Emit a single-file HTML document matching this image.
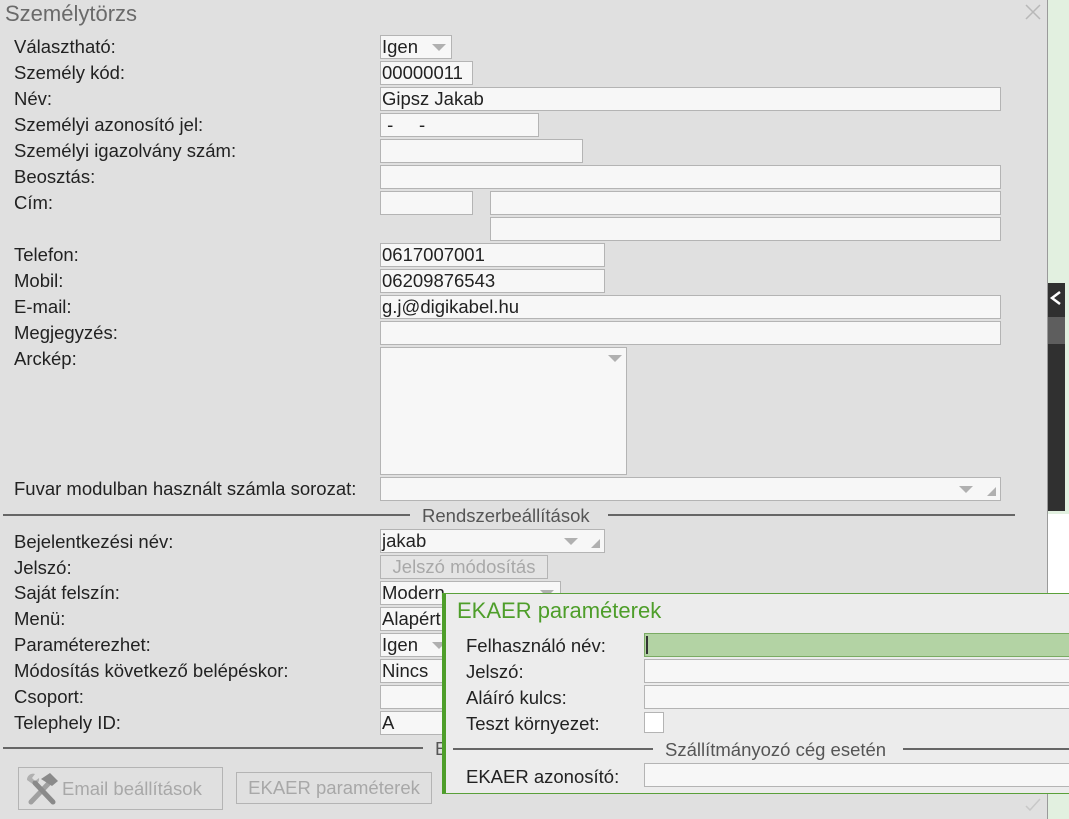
<!DOCTYPE html>
<html><head><meta charset="utf-8"><style>
*{margin:0;padding:0;box-sizing:border-box}
body{width:1069px;height:819px;overflow:hidden;background:#e0e0e0;font-family:"Liberation Sans",Arial,sans-serif;font-size:18.5px;color:#222;position:relative}
.a{position:absolute;white-space:nowrap}
.l{position:absolute;left:14px;line-height:20px;white-space:nowrap}
.i{position:absolute;background:#f7f7f7;border:1px solid #b4b4b4;height:24px;line-height:22px;padding-left:1px;white-space:nowrap;overflow:hidden}
.tri{position:absolute;width:0;height:0;border-left:7px solid transparent;border-right:7px solid transparent;border-top:7px solid #b0b0b0}
.rs{position:absolute;width:0;height:0;border-left:9px solid transparent;border-bottom:9px solid #b0b0b0}
.line{position:absolute;height:2px;background:#666}
</style></head><body>
<div class="a" style="left:1047px;top:0;width:1px;height:819px;background:#9a9a9a"></div>
<div class="a" style="left:1048px;top:0;width:21px;height:819px;background:#e2f0e0"></div>
<div class="a" style="left:1048px;top:514px;width:21px;height:80px;background:#fff"></div>
<div class="a" style="left:1048px;top:283px;width:17px;height:228px;background:#303030"></div>
<div class="a" style="left:1048px;top:317px;width:17px;height:27px;background:#5e5e5e"></div>
<svg class="a" style="left:1048px;top:290px" width="14" height="16"><path d="M12 2 L4 8 L12 14" stroke="#fff" stroke-width="2.5" fill="none"/></svg>

<div class="a" style="left:5px;top:1px;font-size:22px;color:#6a6a6a">Személytörzs</div>
<svg class="a" style="left:1024px;top:3px" width="18" height="18"><path d="M2 2 L16 16 M16 2 L2 16" stroke="#b8b8b8" stroke-width="1.5"/></svg>

<div class="l" style="top:37px">Választható:</div>
<div class="l" style="top:63px">Személy kód:</div>
<div class="l" style="top:89px">Név:</div>
<div class="l" style="top:115px">Személyi azonosító jel:</div>
<div class="l" style="top:141px">Személyi igazolvány szám:</div>
<div class="l" style="top:167px">Beosztás:</div>
<div class="l" style="top:193px">Cím:</div>
<div class="l" style="top:245px">Telefon:</div>
<div class="l" style="top:271px">Mobil:</div>
<div class="l" style="top:297px">E-mail:</div>
<div class="l" style="top:323px">Megjegyzés:</div>
<div class="l" style="top:349px">Arckép:</div>
<div class="l" style="top:479px">Fuvar modulban használt számla sorozat:</div>

<div class="i" style="left:380px;top:35px;width:72px">Igen</div><div class="tri" style="left:432px;top:44px"></div>
<div class="i" style="left:380px;top:61px;width:93px">00000011</div>
<div class="i" style="left:380px;top:87px;width:621px">Gipsz Jakab</div>
<div class="i" style="left:380px;top:113px;width:159px">&nbsp;-&nbsp;&nbsp;&nbsp;&nbsp;&nbsp;-</div>
<div class="i" style="left:380px;top:139px;width:203px"></div>
<div class="i" style="left:380px;top:165px;width:621px"></div>
<div class="i" style="left:380px;top:191px;width:93px"></div>
<div class="i" style="left:490px;top:191px;width:511px"></div>
<div class="i" style="left:490px;top:217px;width:511px"></div>
<div class="i" style="left:380px;top:243px;width:225px">0617007001</div>
<div class="i" style="left:380px;top:269px;width:225px">06209876543</div>
<div class="i" style="left:380px;top:295px;width:621px">g.j@digikabel.hu</div>
<div class="i" style="left:380px;top:321px;width:621px"></div>
<div class="i" style="left:380px;top:347px;width:247px;height:128px"></div><div class="tri" style="left:608px;top:355px"></div>
<div class="i" style="left:380px;top:477px;width:621px"></div><div class="tri" style="left:959px;top:486px"></div><div class="rs" style="left:987px;top:487px"></div>

<div class="line" style="left:3px;top:514px;width:407px"></div>
<div class="a" style="left:422px;top:505px;color:#555">Rendszerbeállítások</div>
<div class="line" style="left:608px;top:514px;width:407px"></div>

<div class="l" style="top:532px">Bejelentkezési név:</div>
<div class="l" style="top:558px">Jelszó:</div>
<div class="l" style="top:583px">Saját felszín:</div>
<div class="l" style="top:609px">Menü:</div>
<div class="l" style="top:635px">Paraméterezhet:</div>
<div class="l" style="top:661px">Módosítás következő belépéskor:</div>
<div class="l" style="top:687px">Csoport:</div>
<div class="l" style="top:713px">Telephely ID:</div>

<div class="i" style="left:380px;top:529px;width:225px">jakab</div><div class="tri" style="left:564px;top:538px"></div><div class="rs" style="left:591px;top:539px"></div>
<div class="a" style="left:380px;top:555px;width:168px;height:24px;border:1px solid #b4b4b4;background:#e4e4e4;color:#a8a8a8;text-align:center;line-height:22px">Jelszó módosítás</div>
<div class="i" style="left:380px;top:581px;width:181px">Modern</div><div class="tri" style="left:540px;top:590px"></div>
<div class="i" style="left:380px;top:607px;width:120px">Alapért</div>
<div class="i" style="left:380px;top:633px;width:80px">Igen</div><div class="tri" style="left:432px;top:642px"></div>
<div class="i" style="left:380px;top:659px;width:80px">Nincs</div>
<div class="i" style="left:380px;top:685px;width:80px"></div>
<div class="i" style="left:380px;top:711px;width:80px">A</div>

<div class="line" style="left:3px;top:747px;width:420px"></div>
<div class="a" style="left:435px;top:738px;color:#555">E</div>

<div class="a" style="left:18px;top:767px;width:205px;height:43px;border:1px solid #b4b4b4;color:#a8a8a8;line-height:41px;padding-left:43px">Email beállítások</div>
<svg class="a" style="left:24px;top:771px" width="36" height="36" viewBox="0 0 36 36"><path d="M7 31 L25 12" stroke="#a0a0a0" stroke-width="5" stroke-linecap="round"/><path d="M3 9 A6 6 0 0 1 11 3 L8 7 L11 10 L15 7 A6 6 0 0 1 10 14 Z" fill="#b0b0b0"/><path d="M11 12 L29 31" stroke="#8a8a8a" stroke-width="5" stroke-linecap="round"/><path d="M17 8 L26 2 L34 10 L28 15 Z" fill="#8a8a8a"/></svg>
<div class="a" style="left:236px;top:772px;width:196px;height:32px;border:1px solid #b4b4b4;color:#a8a8a8;line-height:30px;text-align:center">EKAER paraméterek</div>
<svg class="a" style="left:1024px;top:797px" width="18" height="16"><path d="M2 9 L6 13 L16 2" stroke="#c8c8c8" stroke-width="1.5" fill="none"/></svg>

<div class="a" style="left:442px;top:593px;width:627px;height:201px;background:#ececec;border-top:1px solid #5aa03a;border-bottom:1px solid #5aa03a;border-left:4px solid #4e9e2a"></div>
<div class="a" style="left:457px;top:598px;font-size:22px;color:#4e9e2a">EKAER paraméterek</div>
<div class="a" style="left:466px;top:635px">Felhasználó név:</div>
<div class="a" style="left:466px;top:661px">Jelszó:</div>
<div class="a" style="left:466px;top:687px">Aláíró kulcs:</div>
<div class="a" style="left:466px;top:713px">Teszt környezet:</div>
<div class="a" style="left:644px;top:633px;width:430px;height:24px;background:#b3d3a4;border:1px solid #7aab63"></div>
<div class="a" style="left:646px;top:636px;width:2px;height:18px;background:#333"></div>
<div class="i" style="left:644px;top:659px;width:430px"></div>
<div class="i" style="left:644px;top:685px;width:430px"></div>
<div class="a" style="left:644px;top:712px;width:20px;height:21px;background:#fff;border:1px solid #b4b4b4"></div>
<div class="line" style="left:453px;top:748px;width:200px"></div>
<div class="a" style="left:665px;top:739px;color:#555">Szállítmányozó cég esetén</div>
<div class="line" style="left:903px;top:748px;width:170px"></div>
<div class="a" style="left:466px;top:766px">EKAER azonosító:</div>
<div class="i" style="left:644px;top:763px;width:430px"></div>
</body></html>
